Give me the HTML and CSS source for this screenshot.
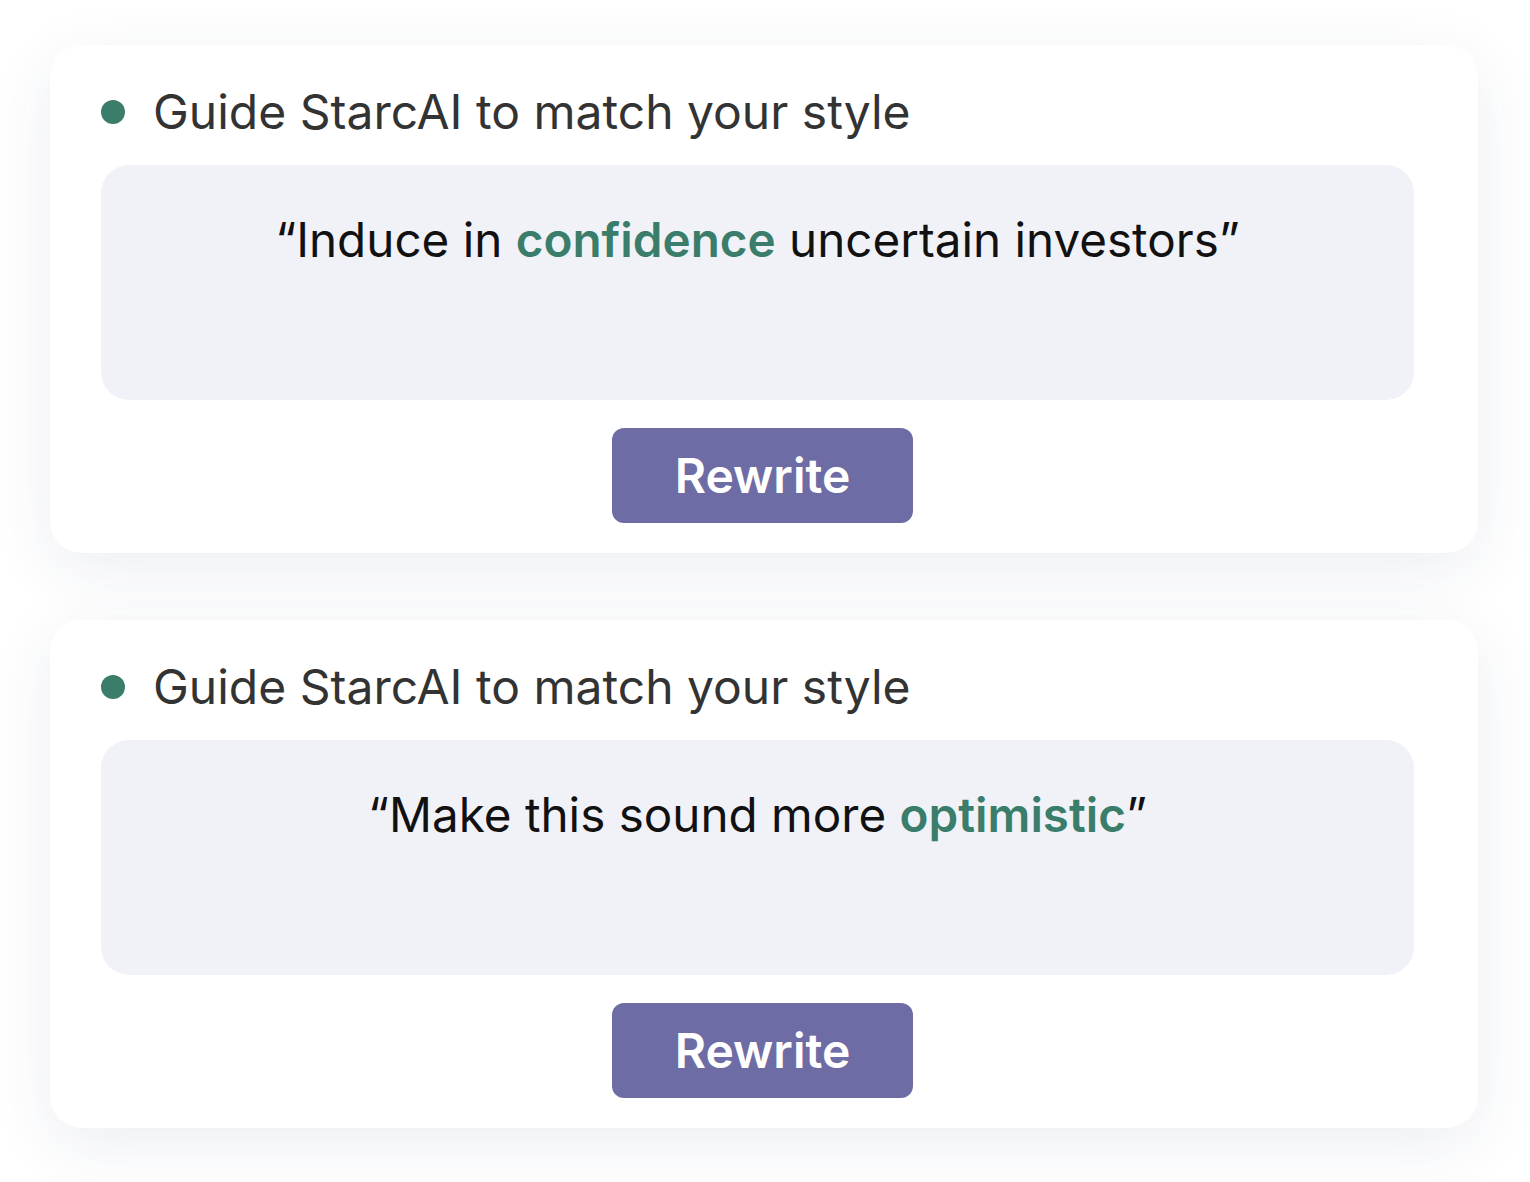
FILE: index.html
```html
<!DOCTYPE html>
<html lang="en">
<head>
<meta charset="utf-8">
<title>StarcAI</title>
<link rel="stylesheet" href="styles.css">
</head>
<body>
<main class="stack">
  <section class="card">
    <h2 class="card-title"><span class="dot"></span>Guide StarcAI to match your style</h2>
    <div class="prompt">“Induce in <strong class="hl">confidence</strong> uncertain investors”</div>
    <div class="actions"><button class="btn">Rewrite</button></div>
  </section>
  <section class="card">
    <h2 class="card-title"><span class="dot"></span>Guide StarcAI to match your style</h2>
    <div class="prompt">“Make this sound more <strong class="hl">optimistic</strong>”</div>
    <div class="actions"><button class="btn">Rewrite</button></div>
  </section>
</main>
</body>
</html>
```
FILE: styles.css
```css
* { box-sizing: border-box; }
html, body { margin: 0; padding: 0; background: #ffffff; }
body { font-family: Inter, "Noto Sans", sans-serif; }
.stack {
  display: flex;
  flex-direction: column;
  gap: 67px;
  padding: 45px 52px 54px 50px;
}
.card {
  background: #ffffff;
  border-radius: 32px;
  box-shadow: 0 16px 64px rgba(40, 55, 100, 0.085);
  padding: 38px 64px 30px 51px;
  height: 508px;
}
.card-title {
  margin: 0;
  display: flex;
  align-items: center;
  font-size: 48px;
  font-weight: 400;
  line-height: 58px;
  color: #333333;
}
.dot {
  width: 24px;
  height: 24px;
  border-radius: 50%;
  background: #3a7d6a;
  margin-right: 28px;
  flex: none;
}
.prompt {
  margin-top: 24px;
  height: 235px;
  background: #f1f2f7;
  border-radius: 28px;
  padding-top: 46px;
  text-align: center;
  font-size: 47.6px;
  line-height: 58px;
  color: #111111;
}
.hl { color: #3a7d6a; font-weight: 600; }
.actions { display: flex; justify-content: center; margin-top: 28px; padding-left: 10px; }
.btn {
  width: 301px;
  height: 95px;
  border: none;
  border-radius: 12px;
  background: #6e6ca5;
  color: #ffffff;
  font-family: Inter, "Noto Sans", sans-serif;
  font-size: 48px;
  font-weight: 600;
  padding: 0;
}
```
